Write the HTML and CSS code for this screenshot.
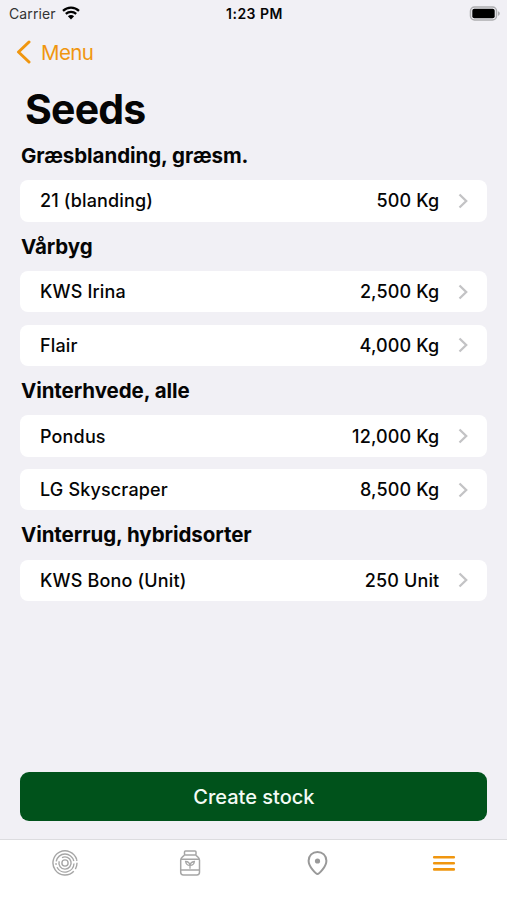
FILE: index.html
```html
<!DOCTYPE html>
<html lang="en">
<head>
    <meta charset="UTF-8">
    <meta name="viewport" content="width=device-width, initial-scale=1.0">
    <title>Seeds</title>
    <link rel="stylesheet" href="styles.css">
</head>
<body>
    <div class="status-bar">
        <div class="carrier">
            <span>Carrier</span>
            <svg class="wifi" width="18" height="14" viewBox="0 0 18 14">
                <path d="M1 4.9C5.5 .6 12.5 .6 17 4.9M3.8 7.9C6.8 5.1 11.2 5.1 14.2 7.9" fill="none" stroke="#000" stroke-width="2.2"/>
                <path d="M5.9 10.2C7.7 8.6 10.3 8.6 12.1 10.2L9 13.4z"/>
            </svg>
        </div>
        <span class="time">1:23 PM</span>
        <svg class="battery" width="31" height="15" viewBox="0 0 31 15">
            <rect x="1.5" y="1" width="26" height="13" rx="4" fill="none" stroke="#adadb0" stroke-width="1.5"/>
            <rect x="3.3" y="2.8" width="22.4" height="9.4" rx="2"/>
            <path d="M29 5.2c2.4.8 2.4 3.8 0 4.6z" fill="#adadb0"/>
        </svg>
    </div>

    <header>
        <a class="back" href="#">
            <svg width="15" height="24" viewBox="0 0 15 24">
                <path d="M13 2L2.5 12 13 22" fill="none" stroke="currentColor" stroke-width="3" stroke-linecap="round" stroke-linejoin="round"/>
            </svg>
            <span>Menu</span>
        </a>
        <h1>Seeds</h1>
    </header>

    <main>
        <h2 class="h-grass">Græsblanding, græsm.</h2>
        <ul>
            <li><span class="name">21 (blanding)</span><span class="amount">500 Kg</span><svg class="arrow" viewBox="0 0 10 16"><path d="M1.5 1.5L8.2 8l-6.7 6.5"/></svg></li>
        </ul>

        <h2>Vårbyg</h2>
        <ul>
            <li><span class="name">KWS Irina</span><span class="amount">2,500 Kg</span><svg class="arrow" viewBox="0 0 10 16"><path d="M1.5 1.5L8.2 8l-6.7 6.5"/></svg></li>
            <li><span class="name">Flair</span><span class="amount">4,000 Kg</span><svg class="arrow" viewBox="0 0 10 16"><path d="M1.5 1.5L8.2 8l-6.7 6.5"/></svg></li>
        </ul>

        <h2>Vinterhvede, alle</h2>
        <ul>
            <li><span class="name">Pondus</span><span class="amount">12,000 Kg</span><svg class="arrow" viewBox="0 0 10 16"><path d="M1.5 1.5L8.2 8l-6.7 6.5"/></svg></li>
            <li><span class="name">LG Skyscraper</span><span class="amount">8,500 Kg</span><svg class="arrow" viewBox="0 0 10 16"><path d="M1.5 1.5L8.2 8l-6.7 6.5"/></svg></li>
        </ul>

        <h2>Vinterrug, hybridsorter</h2>
        <ul>
            <li><span class="name">KWS Bono (Unit)</span><span class="amount">250 Unit</span><svg class="arrow" viewBox="0 0 10 16"><path d="M1.5 1.5L8.2 8l-6.7 6.5"/></svg></li>
        </ul>
    </main>

    <button class="create">Create stock</button>

    <nav>
        <!-- Fields -->
        <a class="fields" href="#">
            <svg width="26" height="26" viewBox="0 0 26 26" fill="none" stroke="#a6a6a6" stroke-width="1.4">
                <circle cx="13" cy="13" r="3.1"/>
                <path d="M10 7.7A6.1 6.1 0 1 1 7.2 11.2"/>
                <path d="M4.2 11.3A9 9 0 0 1 21.8 11M22 13.5A9 9 0 0 1 5 17.2M3.9 13.2l.3 1.7"/>
                <path d="M24.6 9.3A12.1 12.1 0 1 0 21.8 21.3M25 12.8A12.1 12.1 0 0 1 23.4 19.1M24.6 9.3l.3 1.5"/>
            </svg>
        </a>
        <!-- Stock -->
        <a href="#">
            <svg width="22" height="26" viewBox="0 0 22 26" fill="none" stroke="#a6a6a6" stroke-width="1.5">
                <rect x="5.5" y="1" width="11.5" height="4" rx="1"/>
                <path d="M5.5 5C4 7 1.7 7.3 1.7 10v12.3c0 1.6 1 2.7 2.7 2.7h13.4c1.7 0 2.7-1.1 2.7-2.7V10c0-2.7-2.3-3-3.8-5M1.7 9.3h18.8M1.7 20h18.8"/>
                <path d="M11 18.7v-3.6M10.8 15.4c-2.7 0-3.8-1.3-4.2-3.9 2.6 0 4 1.4 4.2 3.9zM11.2 15.4c0-2.4 1.4-3.5 4.2-3.9-.3 2.6-1.5 3.9-4.2 3.9z" stroke-width="1.3"/>
            </svg>
        </a>
        <!-- Map -->
        <a href="#">
            <svg width="22" height="26" viewBox="0 0 22 26">
                <path d="M11.5 24c-1.4 0-8.9-7.2-8.9-13.3C2.6 5.5 6.5 2 11.5 2s8.9 3.5 8.9 8.7C20.4 16.8 12.9 24 11.5 24z" fill="none" stroke="#999" stroke-width="2"/>
                <circle cx="11.5" cy="11" r="2.6" fill="#999"/>
            </svg>
        </a>
        <!-- Menu -->
        <a href="#">
            <svg width="24" height="26" viewBox="0 0 24 26">
                <path d="M2.2 7.2h19.6M2.2 13.2h19.6M2.2 19.4h19.6" stroke="#f0960f" stroke-width="2.6" stroke-linecap="round"/>
            </svg>
        </a>
    </nav>
</body>
</html>
```
FILE: styles.css
```css
* {
    box-sizing: border-box;
}

body {
    font-family: Inter, "Liberation Sans", sans-serif;
    margin: 0;
    height: 900px;
    background-color: #f1f0f5;
    color: #050505;
    display: flex;
    flex-direction: column;
    overflow: hidden;
}

.status-bar {
    display: grid;
    grid-template-columns: 1fr auto 1fr;
    align-items: center;
    height: 27px;
    padding: 0 7px 0 9px;
}

.carrier {
    display: flex;
    align-items: center;
    gap: 6px;
    font-size: 14px;
    letter-spacing: 0.1px;
    color: #333;
}

.wifi {
    margin-top: -2px;
}

.time {
    font-size: 14px;
    font-weight: 600;
    letter-spacing: 0.5px;
}

.battery {
    justify-self: end;
}

.back {
    display: flex;
    align-items: center;
    gap: 10px;
    height: 50px;
    padding-left: 16px;
    color: #f0960f;
    font-size: 20.5px;
    letter-spacing: -0.6px;
    text-decoration: none;
}

h1 {
    margin: 6px 0 0 25px;
    font-size: 41px;
    line-height: 53px;
    height: 52px;
    font-weight: 700;
    letter-spacing: -0.8px;
}

main {
    padding: 0 19.6px 0 20.4px;
    flex: 1;
}

h2 {
    margin: 0;
    padding-left: 0.5px;
    height: 49.3px;
    line-height: 50px;
    font-size: 20.5px;
    font-weight: 700;
    letter-spacing: -0.06px;
    white-space: nowrap;
}

.h-grass {
    height: 45.3px;
    line-height: 41px;
}

ul {
    list-style-type: none;
    margin: 0;
    padding: 0;
    display: flex;
    flex-direction: column;
    gap: 12.3px;
}

li {
    display: flex;
    align-items: center;
    height: 41.4px;
    padding: 0 19px 0 19.6px;
    background-color: white;
    border-radius: 8px;
    font-size: 18px;
    font-weight: 550;
}

.name {
    flex: 1;
    letter-spacing: 0.16px;
}

.amount {
    letter-spacing: 0.15px;
}

.arrow {
    width: 10px;
    height: 16px;
    margin-left: 19px;
    fill: none;
    stroke: #c3c3c5;
    stroke-width: 2.3;
}

.create {
    height: 49px;
    margin: 0 19.6px 18.5px 20.4px;
    padding-top: 3px;
    border: none;
    border-radius: 9px;
    background-color: #00521b;
    color: #f4fbf5;
    font-family: inherit;
    font-size: 20px;
    font-weight: 500;
}

nav {
    display: grid;
    grid-template-columns: repeat(4, 1fr);
    height: 61px;
    padding-top: 10px;
    background-color: white;
    border-top: 1px solid #dcdcdf;
}

nav a {
    display: flex;
    justify-content: center;
    align-items: flex-start;
}

nav .fields {
    padding-left: 3px;
}
```
